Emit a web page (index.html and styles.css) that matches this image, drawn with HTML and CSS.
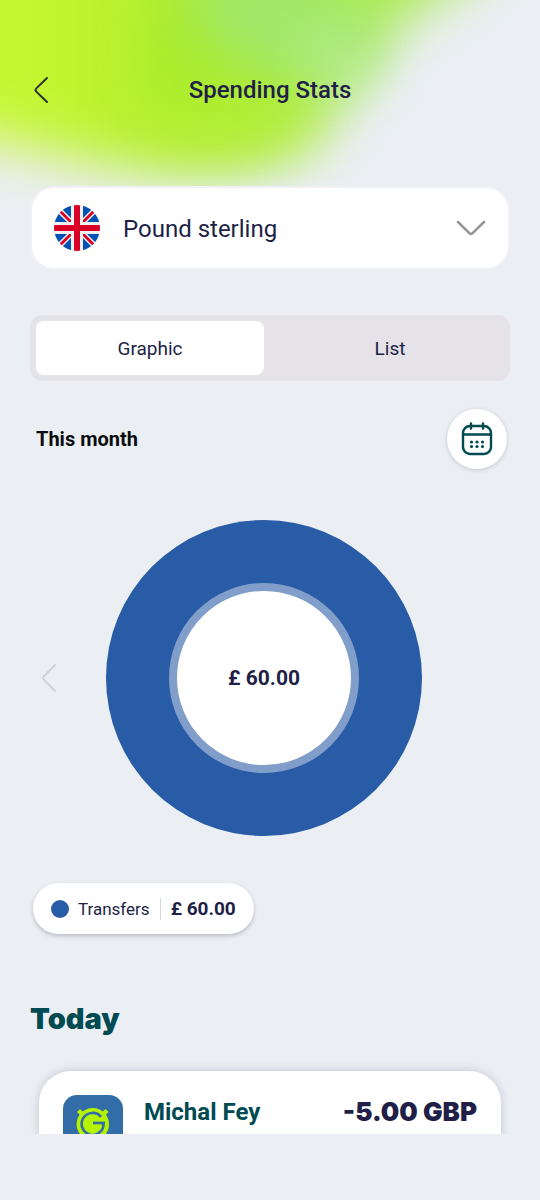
FILE: index.html
```html
<!DOCTYPE html>
<html lang="en">
<head>
  <meta charset="utf-8">
  <meta name="viewport" content="width=device-width, initial-scale=1">
  <title>Spending Stats</title>
  <link rel="stylesheet" href="styles.css">
</head>
<body>
  <svg class="glow" viewBox="0 0 540 300" aria-hidden="true">
    <defs>
      <linearGradient id="lime" gradientUnits="userSpaceOnUse" x1="0" y1="0" x2="400" y2="0">
        <stop offset="0" stop-color="#c8f733"/>
        <stop offset="0.22" stop-color="#bef32e"/>
        <stop offset="0.5" stop-color="#aeed2e"/>
        <stop offset="1" stop-color="#aaea50"/>
      </linearGradient>
      <filter id="soft" x="-30%" y="-50%" width="160%" height="200%" color-interpolation-filters="sRGB"><feGaussianBlur stdDeviation="27"/></filter>
      <filter id="softer" x="-80%" y="-100%" width="260%" height="300%" color-interpolation-filters="sRGB"><feGaussianBlur stdDeviation="26"/></filter>
    </defs>
    <path d="M-100 -120H560C500 -50 455 -10 415 12C370 40 352 75 336 108C320 145 280 176 200 174C120 172 50 153 0 142C-40 133 -70 130 -100 130Z" fill="url(#lime)" filter="url(#soft)"/>
    <ellipse cx="185" cy="50" rx="36" ry="60" fill="#a2e92c" opacity="0.6" filter="url(#softer)"/>
    <ellipse cx="285" cy="22" rx="100" ry="54" fill="#a2e870" opacity="0.9" filter="url(#softer)" transform="rotate(20 285 22)"/>
    <ellipse cx="340" cy="62" rx="34" ry="26" fill="#c6eeb4" opacity="0.6" filter="url(#softer)"/>
    <ellipse cx="225" cy="125" rx="90" ry="18" fill="#b9f033" opacity="0.7" filter="url(#softer)"/>
  </svg>

  <header class="topbar">
    <button class="icon-button" type="button" aria-label="Back">
      <svg width="18" height="28" viewBox="0 0 18 28"><path d="M15 2L4.300 12.400Q2.700 14 4.300 15.600L15 26" fill="none" stroke="#2b3032" stroke-width="2" stroke-linecap="round"/></svg>
    </button>
    <h1>Spending Stats</h1>
  </header>

  <main class="content">
    <label class="currency">
      <svg class="flag" viewBox="0 0 46 46" aria-hidden="true">
        <defs><clipPath id="disc"><circle cx="23" cy="23" r="23"/></clipPath></defs>
        <g clip-path="url(#disc)">
          <path d="M0 0H46V46H0Z" fill="#f0f0f0"/>
          <path d="M17 0V13L4 0ZM29 0V13L42 0ZM17 46V33L4 46ZM29 46V33L42 46ZM0 17H13L0 4ZM46 17H33L46 4ZM0 29H13L0 42ZM46 29H33L46 42Z" fill="#0052b4"/>
          <path d="M3 7L6 4L17 15V17H14ZM43 7L40 4L29 15V17H31ZM3 39L6 42L17 31V29H14ZM43 39L40 42L29 31V29H31Z" fill="#f0f0f0"/>
          <path d="M5 7L7 5L17 15V17H15ZM39 5L41 7L31 17H29V15ZM5 39L7 41L17 31V29H15ZM39 41L41 39L31 29H29V31Z" fill="#d80027"/>
          <path d="M17 0H20V46H17ZM26 0H29V46H26ZM0 17H46V20H0ZM0 26H46V29H0Z" fill="#f0f0f0"/>
          <path d="M20 0H26V20H46V26H26V46H20V26H0V20H20Z" fill="#d80027"/>
        </g>
      </svg>
      <select aria-label="Currency"><option>Pound sterling</option></select>
      <svg class="chevron" width="30" height="17" viewBox="0 0 30 17" aria-hidden="true"><path d="M2 2L13.400 13.200Q15 14.800 16.600 13.200L28 2" fill="none" stroke="#949398" stroke-width="2.500" stroke-linecap="round"/></svg>
    </label>

    <div class="tabs" role="tablist">
      <button class="tab tab-active" type="button" role="tab" aria-selected="true">Graphic</button>
      <button class="tab" type="button" role="tab" aria-selected="false">List</button>
    </div>

    <div class="period">
      <h2>This month</h2>
      <button class="calendar" type="button" aria-label="Choose period">
        <svg width="32" height="34" viewBox="0 0 32 34">
          <rect x="2" y="4" width="28" height="28" rx="7" fill="none" stroke="#004a52" stroke-width="2.400"/>
          <path d="M2 12.500H30M10 1.500V6.500M22 1.500V6.500" fill="none" stroke="#004a52" stroke-width="2.400" stroke-linecap="round"/>
          <g fill="#004a52"><circle cx="10.500" cy="20" r="1.600"/><circle cx="16" cy="20" r="1.600"/><circle cx="21.500" cy="20" r="1.600"/><circle cx="10.500" cy="24.500" r="1.600"/><circle cx="16" cy="24.500" r="1.600"/><circle cx="21.500" cy="24.500" r="1.600"/></g>
        </svg>
      </button>
    </div>

    <section class="chart">
      <button class="icon-button" type="button" aria-label="Previous month">
        <svg width="18" height="30" viewBox="0 0 18 30"><path d="M15 2L3.800 13.400Q2.200 15 3.800 16.600L15 28" fill="none" stroke="#d1d2d5" stroke-width="2" stroke-linecap="round"/></svg>
      </button>
      <div class="donut"><div class="donut-hole">£ 60.00</div></div>
    </section>

    <div class="legend">
      <span class="dot"></span>
      <span class="legend-name">Transfers</span>
      <strong>£ 60.00</strong>
    </div>

    <h2 class="day">Today</h2>
    <article class="transaction">
      <svg class="avatar" viewBox="0 0 60 60" aria-hidden="true">
        <rect width="60" height="60" rx="14" fill="#336da8"/>
        <circle cx="29.800" cy="29.300" r="16.200" fill="#b5f300"/>
        <path d="M15.500 15.500L21 21M44 15.500L38.500 21" fill="none" stroke="#b5f300" stroke-width="4.400"/>
        <path d="M38 21.800A11 11 0 1 0 40.600 29.200H30" fill="none" stroke="#336da8" stroke-width="2.600"/>
        <path d="M30 26.600H42V29.500H30Z" fill="#336da8"/>
        <path d="M29 29.300H38.800A9 9 0 0 1 37 34H29Z" fill="#b5f300"/>
      </svg>
      <h3>Michal Fey</h3>
      <span class="amount">-5.00 GBP</span>
    </article>
  </main>
</body>
</html>
```
FILE: styles.css
```css
* {
  box-sizing: border-box;
}

body {
  position: relative;
  display: flex;
  flex-direction: column;
  height: 100vh;
  margin: 0;
  padding-bottom: 66px;
  overflow: hidden;
  background: #ebeff4;
  color: #211f47;
  font-family: Roboto, sans-serif;
}

h1, h2, h3 {
  margin: 0;
}

button, select {
  margin: 0;
  padding: 0;
  border: 0;
  background: none;
  color: inherit;
  font: inherit;
}

svg {
  display: block;
  flex: none;
}

.glow {
  position: absolute;
  top: 0;
  left: 0;
  width: 100%;
  z-index: -1;
}

.topbar {
  display: grid;
  grid-template-columns: 24px 1fr 24px;
  align-items: center;
  flex: none;
  height: 112px;
  margin-top: 34px;
  padding: 0 32px;
}

.topbar h1 {
  font-size: 24px;
  font-weight: 500;
  line-height: 32px;
  text-align: center;
}

.content {
  display: flex;
  flex-direction: column;
  flex: 1;
  min-height: 0;
  padding: 40px 30px 0;
  overflow: hidden;
}

.content > * {
  flex: none;
}

.currency {
  display: flex;
  align-items: center;
  gap: 23px;
  height: 84px;
  padding: 0 22px;
  border: 2px solid #f0f0f5;
  border-radius: 24px;
  background: #fff;
}

.flag {
  width: 46px;
  height: 46px;
}

.currency select {
  flex: 1;
  min-width: 0;
  padding-top: 2px;
  appearance: none;
  font-size: 24px;
  line-height: 32px;
}

.tabs {
  display: grid;
  grid-template-columns: 1fr 1fr;
  gap: 12px;
  margin-top: 45px;
  padding: 6px;
  border-radius: 12px;
  background: #e5e3e8;
}

.tab {
  height: 54px;
  padding-top: 2px;
  border-radius: 8px;
  font-size: 19px;
  line-height: 24px;
}

.tab-active {
  background: #fff;
}

.period {
  display: flex;
  align-items: center;
  justify-content: space-between;
  margin-top: 28px;
  padding: 0 3px 0 6px;
}

.period h2 {
  color: #0b0d0e;
  font-size: 20px;
  font-weight: 700;
  line-height: 24px;
}

.calendar {
  display: grid;
  place-items: center;
  width: 60px;
  height: 60px;
  border-radius: 50%;
  background: #fff;
  box-shadow: 0 1px 4px rgba(40, 40, 60, 0.2);
}

.chart {
  display: grid;
  grid-template-columns: 18px 1fr 18px;
  align-items: center;
  margin-top: 51px;
  padding: 0 22px 0 10px;
}

.donut {
  display: grid;
  place-items: center;
  width: 316px;
  height: 316px;
  margin: 0 auto;
  border-radius: 50%;
  background: #295ca7;
}

.donut-hole {
  display: grid;
  place-items: center;
  width: 190px;
  height: 190px;
  border: 8px solid #819ecb;
  border-radius: 50%;
  background: #fff;
  font-size: 21px;
  font-weight: 700;
}

.legend {
  display: flex;
  align-items: center;
  align-self: flex-start;
  height: 51px;
  margin: 47px 0 0 3px;
  padding: 0 18px;
  border-radius: 26px;
  background: #fff;
  box-shadow: 0 2px 4px rgba(40, 40, 60, 0.25);
  font-size: 17px;
  line-height: 22px;
}

.dot {
  width: 18px;
  height: 18px;
  margin-right: 9px;
  border-radius: 50%;
  background: #295ca7;
}

.legend-name {
  padding-right: 10px;
  border-right: 1px solid #d8d8dc;
}

.legend strong {
  padding-left: 10px;
  font-size: 19px;
}

.day {
  margin-top: 67px;
  color: #004a52;
  font-family: Inter, sans-serif;
  font-size: 29px;
  font-weight: 900;
  line-height: 36px;
}

.transaction {
  display: flex;
  align-items: flex-start;
  margin: 34px 9px 0;
  padding: 24px;
  border-radius: 32px;
  background: #fff;
  box-shadow: 0 0 10px rgba(40, 40, 60, 0.2);
}

.avatar {
  width: 60px;
  height: 60px;
}

.transaction h3 {
  margin-left: 21px;
  color: #004a52;
  font-size: 24px;
  font-weight: 700;
  line-height: 34px;
}

.amount {
  margin-left: auto;
  font-family: Inter, sans-serif;
  font-size: 26px;
  font-weight: 900;
  line-height: 34px;
}
```
